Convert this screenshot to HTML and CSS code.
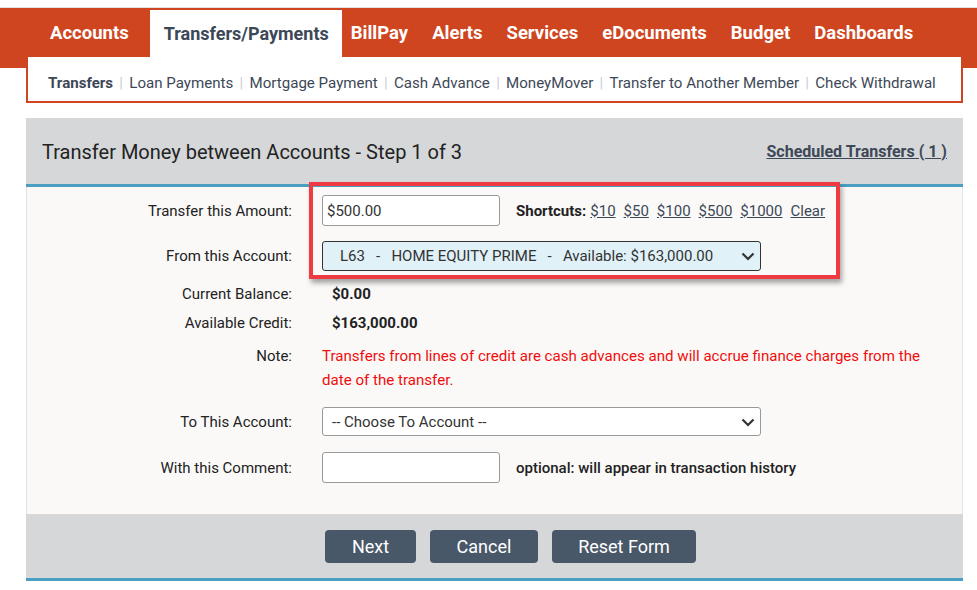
FILE: index.html
```html
<!DOCTYPE html>
<html lang="en">
<head>
  <meta charset="UTF-8" />
  <meta name="viewport" content="width=device-width, initial-scale=1.0" />
  <title>Transfers</title>
  <link rel="stylesheet" href="styles.css">
</head>
<body>
  <div class="topbar">
    <ul class="main-nav">
      <li><a href="#">Accounts</a></li>
      <li class="active"><a href="#">Transfers/Payments</a></li>
      <li><a href="#">BillPay</a></li>
      <li><a href="#">Alerts</a></li>
      <li><a href="#">Services</a></li>
      <li><a href="#">eDocuments</a></li>
      <li><a href="#">Budget</a></li>
      <li><a href="#">Dashboards</a></li>
    </ul>
  </div>

  <div class="wrap">
    <div class="sub-nav">
      <a href="#" class="current">Transfers</a><span class="sep">|</span>
      <a href="#">Loan Payments</a><span class="sep">|</span>
      <a href="#">Mortgage Payment</a><span class="sep">|</span>
      <a href="#">Cash Advance</a><span class="sep">|</span>
      <a href="#">MoneyMover</a><span class="sep">|</span>
      <a href="#">Transfer to Another Member</a><span class="sep">|</span>
      <a href="#">Check Withdrawal</a>
    </div>

    <div class="panel">
      <div class="panel-head">
        <h2>Transfer Money between Accounts - Step 1 of 3</h2>
        <a href="#" class="scheduled">Scheduled Transfers ( 1 )</a>
      </div>

      <form class="panel-body" onsubmit="return false">
        <div class="highlight"></div>

        <div class="row">
          <label for="amount">Transfer this Amount:</label>
          <div class="field">
            <input type="text" id="amount" class="text-input" value="$500.00" />
            <span class="shortcuts">
              <b>Shortcuts:</b>
              <a href="#">$10</a>
              <a href="#">$50</a>
              <a href="#">$100</a>
              <a href="#">$500</a>
              <a href="#">$1000</a>
              <a href="#">Clear</a>
            </span>
          </div>
        </div>

        <div class="row row-select">
          <label for="fromAcct">From this Account:</label>
          <div class="select-wrap">
            <select id="fromAcct" class="select from">
              <option>L63&nbsp;&nbsp;&nbsp;-&nbsp;&nbsp;&nbsp;HOME EQUITY PRIME&nbsp;&nbsp;&nbsp;-&nbsp;&nbsp;&nbsp;Available: $163,000.00</option>
            </select>
            <svg class="chevron" width="14" height="9" viewBox="0 0 14 9"><path d="M1.5 1.5 L7 7 L12.5 1.5" fill="none" stroke="#333" stroke-width="2.2"/></svg>
          </div>
        </div>

        <div class="row row-info first-info">
          <label>Current Balance:</label>
          <div class="value">$0.00</div>
        </div>

        <div class="row row-info">
          <label>Available Credit:</label>
          <div class="value">$163,000.00</div>
        </div>

        <div class="row row-note">
          <label>Note:</label>
          <p class="note">Transfers from lines of credit are cash advances and will accrue finance charges from the date of the transfer.</p>
        </div>

        <div class="row row-to">
          <label for="toAcct">To This Account:</label>
          <div class="select-wrap">
            <select id="toAcct" class="select">
              <option>-- Choose To Account --</option>
            </select>
            <svg class="chevron" width="14" height="9" viewBox="0 0 14 9"><path d="M1.5 1.5 L7 7 L12.5 1.5" fill="none" stroke="#333" stroke-width="2.2"/></svg>
          </div>
        </div>

        <div class="row row-comment">
          <label for="comment">With this Comment:</label>
          <div class="field">
            <input type="text" id="comment" class="text-input" />
            <span class="hint">optional: will appear in transaction history</span>
          </div>
        </div>
      </form>

      <div class="panel-foot">
        <button class="btn btn-next">Next</button>
        <button class="btn btn-cancel">Cancel</button>
        <button class="btn btn-reset">Reset Form</button>
      </div>
    </div>
  </div>
</body>
</html>
```

FILE: styles.css
```css
body {
  margin: 0;
  padding: 0;
  background: #fff;
  font-family: Roboto, "Liberation Sans", sans-serif;
  color: #222;
}
a {
  color: inherit;
}

/* top navigation */
.topbar {
  margin-top: 7px;
  border-top: 1px solid #e2e2e2;
  background: #cf4520;
  height: 60px;
}
.main-nav {
  list-style: none;
  margin: 0;
  padding: 2px 0 0 38px;
  display: flex;
  height: 47px;
}
.main-nav li {
  display: flex;
  align-items: center;
  padding: 0 12px;
}
.main-nav li a {
  color: #fff;
  font-weight: bold;
  font-size: 18.5px;
  text-decoration: none;
  padding-bottom: 1px;
}
.main-nav li.active {
  background: #fff;
  margin-left: 9px;
  margin-right: -3px;
  padding: 0 13px 0 14px;
}
.main-nav li.active a {
  color: #3d4857;
  font-size: 18px;
}

.wrap {
  margin-left: 26px;
  width: 937px;
}
.sub-nav {
  margin-top: -11px;
  position: relative;
  height: 46px;
  box-sizing: border-box;
  padding: 8px 0 0 20px;
  background: #fff;
  border: 2px solid #cf4520;
  border-top: none;
  display: flex;
  align-items: center;
  font-size: 15.1px;
  color: #3d4857;
}
.sub-nav a {
  text-decoration: none;
}
.sub-nav a.current {
  font-weight: bold;
}
.sub-nav .sep {
  color: #c9ced6;
  margin: 0 6.25px;
}

/* transfer panel */
.panel {
  margin-top: 15px;
}
.panel-head {
  background: #d6d7d9;
  height: 66px;
  border-bottom: 3px solid #4a9fc2;
  display: flex;
  align-items: center;
  justify-content: space-between;
  padding: 0 16px 0 16px;
}
.panel-head h2 {
  margin: 0;
  font-size: 20px;
  font-weight: normal;
  color: #222;
  padding-top: 2px;
}
.scheduled {
  font-size: 16px;
  font-weight: bold;
  color: #3d4857;
}

.panel-body {
  position: relative;
  background: #faf9f8;
  border-left: 1px solid #e2e2e2;
  border-right: 1px solid #e2e2e2;
  padding: 8px 0 31px 0;
  margin: 0;
}
.row {
  display: grid;
  grid-template-columns: 265px 1fr;
  column-gap: 30px;
  align-items: center;
  font-size: 15px;
}
.row label {
  text-align: right;
  color: #222;
}
.field {
  display: flex;
  align-items: center;
}
.text-input {
  width: 178px;
  height: 31px;
  box-sizing: border-box;
  border: 1px solid #999;
  border-radius: 3px;
  padding: 0 4px;
  font-family: inherit;
  font-size: 15px;
  color: #333;
  background: #fff;
}
.shortcuts {
  margin-left: 16px;
  color: #3d4857;
  display: flex;
  gap: 8px;
}
.shortcuts b {
  color: #222;
  margin-right: -4px;
}

.row-select {
  margin-top: 15px;
}
.select-wrap {
  position: relative;
  width: 439px;
}
.select {
  appearance: none;
  -webkit-appearance: none;
  width: 439px;
  height: 30px;
  box-sizing: border-box;
  border: 1px solid #999;
  border-radius: 3px;
  background: #fff;
  font-family: inherit;
  font-size: 15px;
  color: #333;
  padding: 0 30px 0 17px;
}
.select.from {
  background: #e1f1f8;
  border-color: #333;
}
#toAcct {
  padding-left: 9px;
}
.chevron {
  position: absolute;
  right: 6px;
  top: 11px;
  pointer-events: none;
}

.row-info {
  height: 29px;
}
.first-info {
  margin-top: 8px;
}
.value {
  font-weight: bold;
  padding-left: 10px;
}

.row-note {
  margin-top: 7px;
  align-items: start;
  line-height: 24px;
}
.note {
  margin: 0;
  color: #f00d0d;
  font-size: 15.1px;
  padding-right: 30px;
}
.row-to {
  margin-top: 15px;
}
.row-to .select {
  height: 29px;
}
.row-comment {
  margin-top: 16px;
}
.hint {
  margin-left: 16px;
  font-weight: 500;
  color: #222;
}

/* the red frame drawn over the amount/account rows */
.highlight {
  position: absolute;
  left: 282px;
  top: -5px;
  width: 531px;
  height: 97px;
  box-sizing: border-box;
  border: 4px solid #ef3a42;
  box-shadow: 2px 4px 5px rgba(0, 0, 0, 0.35);
  pointer-events: none;
}

.panel-foot {
  background: #d6d7d9;
  height: 64px;
  border-bottom: 3px solid #4a9fc2;
  display: flex;
  align-items: center;
  justify-content: center;
  gap: 14px;
  padding: 0 0 0 32px;
}
.btn {
  height: 33px;
  border: none;
  border-radius: 4px;
  background: #485868;
  color: #fff;
  font-family: inherit;
  font-size: 18px;
  cursor: pointer;
}
.btn-next {
  width: 91px;
}
.btn-cancel {
  width: 108px;
}
.btn-reset {
  width: 144px;
}
```
